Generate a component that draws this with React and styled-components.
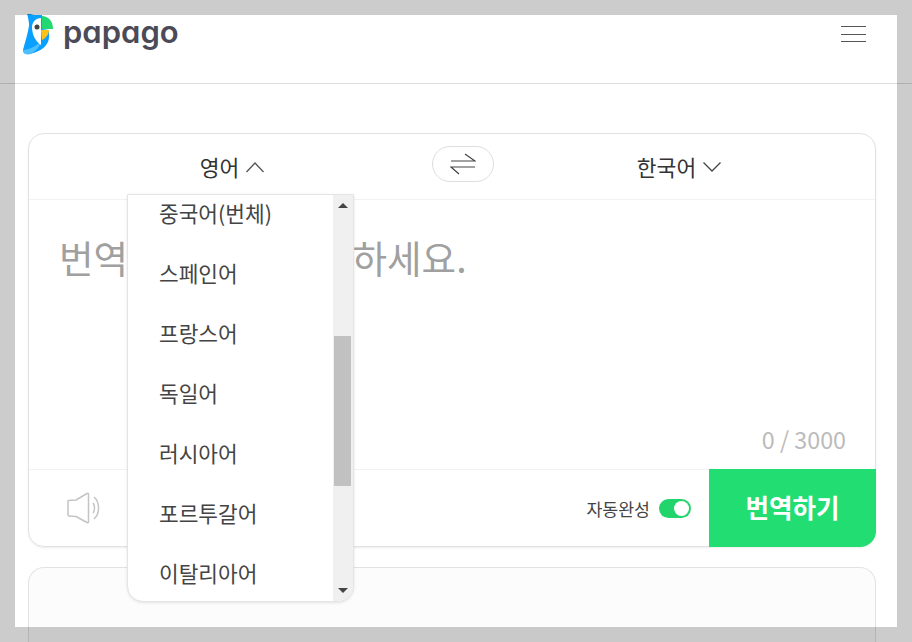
import React from "react";
import styled, { createGlobalStyle } from "styled-components";

const LANGS = ["중국어(번체)", "스페인어", "프랑스어", "독일어", "러시아어", "포르투갈어", "이탈리아어"];

const Global = createGlobalStyle`
  html, body {
    margin: 0;
    height: 100%;
    overflow: hidden;
    background: #fff;
    font-family: "Noto Sans CJK KR", "Noto Sans", sans-serif;
  }
`;

const Frame = styled.div`
  position: fixed;
  inset: 0;
  border: 15px solid rgba(0, 0, 0, 0.2);
  pointer-events: none;
  z-index: 10;
`;

const Header = styled.header`
  height: 83px;
  border-bottom: 1px solid #ddd;
  display: flex;
  justify-content: space-between;
  padding: 0 46px 0 22px;
`;

const Brand = styled.div`
  display: flex;
  align-items: flex-start;
  padding-top: 14px;
`;

const Wordmark = styled.span`
  font-family: Inter, sans-serif;
  font-feature-settings: "cv11" 1;
  font-weight: 600;
  font-size: 31px;
  line-height: 36px;
  color: #4b4b58;
  margin-left: 8px;
`;

const Burger = styled.button`
  margin-top: 26px;
  width: 25px;
  height: 16px;
  padding: 0;
  border: 0;
  background: none;
  display: flex;
  flex-direction: column;
  justify-content: space-between;

  i {
    display: block;
    height: 1px;
    background: #555;
  }
`;

const Main = styled.main`
  padding: 49px 36px 0 28px;
  display: flex;
  flex-direction: column;
  gap: 20px;
`;

const Card = styled.section`
  position: relative;
  height: 414px;
  box-sizing: border-box;
  border: 1px solid #e2e2e2;
  border-radius: 16px;
  box-shadow: 0 1px 2px rgba(0, 0, 0, 0.08);
  display: flex;
  flex-direction: column;
`;

const LangBar = styled.div`
  height: 65px;
  flex: none;
  border-bottom: 1px solid #f2f2f2;
  display: grid;
  grid-template-columns: 403px 62px 1fr;
  align-items: center;
`;

const LangButton = styled.button`
  border: 0;
  background: none;
  padding: 0 ${(p) => p.$right || 0}px 0 ${(p) => p.$left || 0}px;
  display: flex;
  align-items: center;
  justify-content: center;
  gap: 6px;
  font: 400 21.5px "Noto Sans CJK KR", sans-serif;
  color: #333;
`;

const SwapPill = styled.button`
  height: 36px;
  margin-top: -5px;
  border: 1px solid #ddd;
  border-radius: 18px;
  background: #fff;
  padding: 0;
  display: flex;
  align-items: center;
  justify-content: center;
`;

const InputArea = styled.div`
  flex: 1;
  position: relative;
  padding: 28px 30px 0;
  font-size: 37.6px;
  line-height: 58px;
  color: #a0a0a0;
`;

const Counter = styled.span`
  position: absolute;
  right: 29px;
  bottom: 15px;
  font-size: 23.3px;
  line-height: 30px;
  color: #bbb;
`;

const Footer = styled.div`
  height: 76px;
  flex: none;
  border-top: 1px solid #f2f2f2;
  display: flex;
  align-items: center;
  padding-left: 38px;
`;

const AutoLabel = styled.span`
  margin-left: auto;
  font-size: 17.3px;
  color: #444;
`;

const Toggle = styled.span`
  width: 32px;
  height: 19px;
  margin: 0 18px 0 9px;
  box-sizing: border-box;
  border-radius: 10px;
  background: #22d46c;
  display: flex;
  justify-content: flex-end;
  padding: 2px;

  i {
    width: 15px;
    height: 15px;
    border-radius: 50%;
    background: #fff;
  }
`;

const Submit = styled.button`
  width: 167px;
  height: 78px;
  margin: -1px -1px -1px 0;
  border: 0;
  padding: 0 0 4px;
  border-bottom-right-radius: 16px;
  background: #22dd71;
  color: #fff;
  font: 700 25.6px "Noto Sans CJK KR", sans-serif;
`;

const ResultCard = styled.section`
  height: 74px;
  border: 1px solid #e2e2e2;
  border-bottom: 0;
  border-radius: 16px 16px 0 0;
  background: #fcfcfc;
`;

const Dropdown = styled.div`
  position: absolute;
  top: 60px;
  left: 98px;
  width: 227px;
  height: 408px;
  box-sizing: border-box;
  border: 1px solid #e4e4e4;
  border-radius: 0 0 16px 16px;
  background: #fff;
  box-shadow: 0 1px 3px rgba(0, 0, 0, 0.1);
  overflow: hidden;
  display: flex;
  z-index: 5;
`;

const LangList = styled.ul`
  flex: 1;
  list-style: none;
  margin: -12px 0 0;
  padding: 0;
`;

const LangItem = styled.li`
  height: 60px;
  padding-left: 31px;
  font-size: 21.4px;
  line-height: 60px;
  color: #444;
`;

const ScrollTrack = styled.div`
  position: relative;
  width: 20px;
  background: #f0f0f0;
`;

const ScrollThumb = styled.div`
  position: absolute;
  top: 141px;
  left: 1px;
  width: 17px;
  height: 150px;
  background: #c1c1c1;
`;

const ArrowUp = styled.span`
  position: absolute;
  top: 8px;
  left: 5px;
  border: 5px solid transparent;
  border-top: 0;
  border-bottom: 5px solid #444;
`;

const ArrowDown = styled.span`
  position: absolute;
  bottom: 8px;
  left: 5px;
  border: 5px solid transparent;
  border-bottom: 0;
  border-top: 5px solid #444;
`;

const Chevron = ({ up }) => (
  <svg width="20" height="12" viewBox="0 0 20 12" fill="none" stroke={up ? "#555" : "#444"} strokeWidth="1.3">
    <path d={up ? "M1.5 11 10 2l8.500 9" : "M1.500 1.500 10 10l8.500-8.500"} />
  </svg>
);

const SwapIcon = () => (
  <svg width="26" height="22" viewBox="0 0 26 22" fill="none" stroke="#444" strokeWidth="1.2">
    <path d="M1 8h24L15 1" />
    <path d="M25 14H1l8 7" />
  </svg>
);

const SpeakerIcon = () => (
  <svg width="36" height="32" viewBox="0 0 36 32" fill="none" stroke="#c4c4c4" strokeWidth="1.5" strokeLinejoin="round">
    <path d="M1 8.500 9 8l11-6.500c.8-.4 1.500 0 1.500.8v27.400c0 .8-.7 1.200-1.500.8L9 24.500 2 24c-.6 0-1-.4-1-1z" />
    <path d="M26 11c2 2.500 2 7.500 0 10" />
    <path d="M27 5c6 5 6 17 0 22" />
  </svg>
);

const Logo = () => (
  <svg width="33" height="42" viewBox="22 14 33 42">
    <path d="M27 13l7 2h8v14l7 1v7c0 8-7 14-19 17-4 .8-7 0-7-4 2-8 5-17 6-24 .3-4-1-8-2-13z" fill="#0aa0ff" />
    <path d="M23 50c6-.5 13-3 18-9-1 6-6 11-11 13-4 .8-7 0-7-4z" fill="#4cc0ff" />
    <path d="M41 18c-5 0-9 4-9 9 0 8 4 15 9 18z" fill="#fff" />
    <path d="M42 16c6 0 11 5 11 13H42z" fill="#22d873" />
    <path d="M41 30h8c0 4-3 8-7 10z" fill="#ffc21a" />
    <circle cx="37" cy="27" r="2.500" fill="#444" />
  </svg>
);

const App = () => {
  return (
    <>
      <Global />
      <Header>
        <Brand>
          <Logo />
          <Wordmark>papago</Wordmark>
        </Brand>
        <Burger aria-label="menu">
          <i />
          <i />
          <i />
        </Burger>
      </Header>
      <Main>
        <Card>
          <LangBar>
            <LangButton $left={4}>
              영어 <Chevron up />
            </LangButton>
            <SwapPill>
              <SwapIcon />
            </SwapPill>
            <LangButton $right={10}>
              한국어 <Chevron />
            </LangButton>
          </LangBar>
          <InputArea>
            번역할 내용을 입력하세요.
            <Counter>0 / 3000</Counter>
          </InputArea>
          <Footer>
            <SpeakerIcon />
            <AutoLabel>자동완성</AutoLabel>
            <Toggle>
              <i />
            </Toggle>
            <Submit>번역하기</Submit>
          </Footer>
          <Dropdown>
            <LangList>
              {LANGS.map((lang) => (
                <LangItem key={lang}>{lang}</LangItem>
              ))}
            </LangList>
            <ScrollTrack>
              <ArrowUp />
              <ScrollThumb />
              <ArrowDown />
            </ScrollTrack>
          </Dropdown>
        </Card>
        <ResultCard />
      </Main>
      <Frame />
    </>
  );
};

export default App;
